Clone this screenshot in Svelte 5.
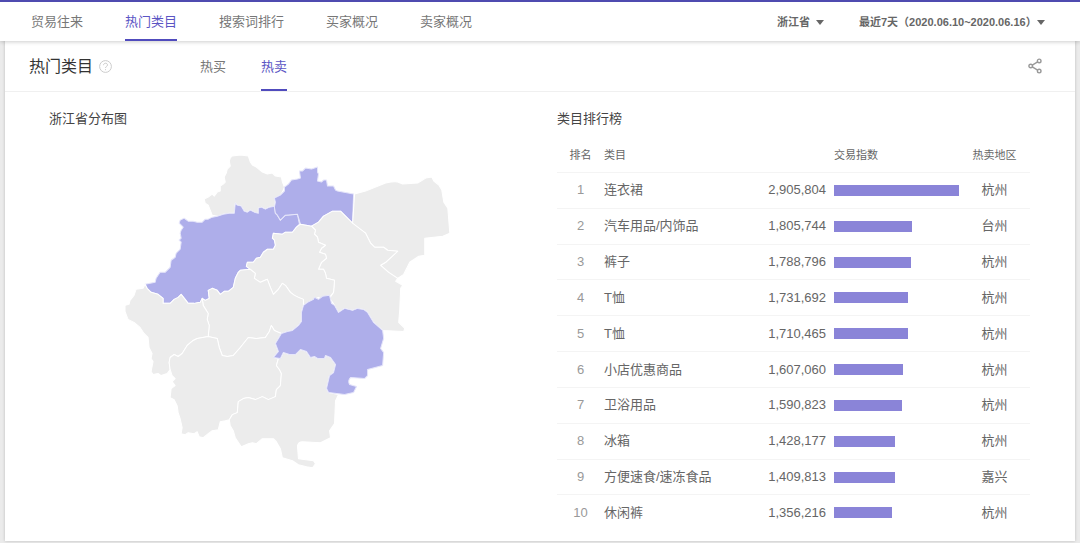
<script>
    const nav = ["贸易往来", "热门类目", "搜索词排行", "买家概况", "卖家概况"];
    const tabs = ["热买", "热卖"];

    let activeNav = "热门类目";
    let activeTab = "热卖";
    let province = "浙江省";
    let period = "最近7天（2020.06.10~2020.06.16）";

    const rows = [
        { name: "连衣裙", value: 2905804, region: "杭州" },
        { name: "汽车用品/内饰品", value: 1805744, region: "台州" },
        { name: "裤子", value: 1788796, region: "杭州" },
        { name: "T恤", value: 1731692, region: "杭州" },
        { name: "T恤", value: 1710465, region: "杭州" },
        { name: "小店优惠商品", value: 1607060, region: "杭州" },
        { name: "卫浴用品", value: 1590823, region: "杭州" },
        { name: "冰箱", value: 1428177, region: "杭州" },
        { name: "方便速食/速冻食品", value: 1409813, region: "嘉兴" },
        { name: "休闲裤", value: 1356216, region: "杭州" },
    ];

    const max = Math.max(...rows.map(r => r.value));

    // Outline of every city, hot ones are filled with the accent colour.
    const cities = [
        { name: "湖州", d: "M212 215L210 210 208 205 205 203 204 199 208 197 212 194 214 196 217 192 220 191 220 186 223 184 225 182 224 177 226 173 227 169 230 166 229 161 230 158 232 156 240 155 248 156 250 162 252 165 256 167 262 172 267 174 272 173 275 176 281 177 282 182 284 187 282 192 280 195 274 198 275 202 274 206 269 207 265 209 261 207 258 208 258 213 254 212 250 210 247 212 244 211 241 206 237 205 235 203 234 213 229 213 223 214 217 216Z" },
        { name: "杭州", hot: true, d: "M212 217L208 219 205 219 202 222 197 222 193 221 188 221 184 218 180 220 179 223 183 227 181 230 180 233 181 238 179 240 181 242 180 249 176 253 175 257 171 260 170 267 165 272 160 272 156 278 155 282 150 283 145 284 147 288 151 292 158 294 163 298 163 303 170 303 174 299 178 297 181 294 185 299 188 303 194 303 200 302 202 298 205 300 209 298 208 290 212 288 217 290 220 294 224 291 228 291 233 287 235 278 238 272 240 270 250 269 246 266 247 262 253 262 256 258 260 257 263 252 267 249 273 249 275 245 274 240 272 238 273 233 282 234 285 232 292 232 296 227 299 224 297 214 285 215 283 217 280 220 277 215 275 213 274 206 269 207 265 209 261 207 258 208 258 213 254 212 250 210 247 212 244 211 241 206 237 205 235 203 234 213 229 213 223 214 217 216Z" },
        { name: "嘉兴", hot: true, d: "M274 207L275 202 274 198 280 195 284 191 284 187 288 184 291 180 297 179 300 178 299 171 302 171 305 168 311 169 317 167 317 172 318 174 317 181 321 182 323 180 326 180 327 186 333 186 335 190 337 191 353 194 352 223 340 211 332 211 323 216 318 222 311 226 300 224 297 214 285 215 283 217 280 220 277 215 275 213Z" },
        { name: "舟山", d: "M354 194L365 191 385 183Q394 181 397 182L402 184 417 183 425 178 431 177 433 181 438 185 441 190 443 202 447 208 449 233 442 236 424 238 424 255 418 256 409 262 403 274 397 278 388 272 380 265 385 262 397 251 387 250 383 247 374 247 370 243 365 233 352 224Z" },
        { name: "宁波", d: "M311 226L318 222 323 216 332 211 340 211 352 223 365 233 370 243 374 247 383 247 387 250 397 251 385 262 380 265 388 272 397 278 395 281 402 285 400 288 399 310 398 322 404 328 403 331 382 330 373 322 367 312 363 309 357 308 352 310 344 308 338 312 334 305 332 302 329 298 333 292 334 280 326 278 325 273 323 269 318 269 321 262 326 258 325 254 319 252 321 248 325 245 318 242 317 237 314 234 315 230Z" },
        { name: "绍兴", d: "M300 224L311 226 315 230 314 234 317 237 318 242 325 245 321 248 319 252 325 254 326 258 321 262 318 269 323 269 325 273 326 278 334 280 333 292 329 297 326 297 322 299 318 297 313 299 307 302 303 305 303 299 298 297 294 295 290 292 285 285 282 283 278 289 273 294 270 287 267 279 260 282 254 278 255 273 250 269 246 266 247 262 253 262 256 258 260 257 263 252 267 249 273 249 275 245 274 240 272 238 273 233 282 234 285 232 292 232 296 227Z" },
        { name: "金华", d: "M202 298L203 305 208 313 207 319 209 325 208 336 212 337 217 338 219 347 222 355 227 356 233 355 240 347 248 337 256 338 265 337 269 331 271 325 274 330 278 332 281 333 287 331 292 330 298 325 301 321 301 312 303 305 303 299 298 297 294 295 290 292 285 285 282 283 278 289 273 294 270 287 267 279 260 282 254 278 255 273 250 269 240 270 238 272 235 278 233 287 228 291 224 291 220 294 217 290 212 288 208 290 209 298 205 300Z" },
        { name: "衢州", d: "M145 284L143 288 136 289 134 295 130 300 129 304 125 305 125 311 128 319 134 322 140 327 144 333 148 337 149 347 152 353 151 358 153 361 151 371 153 374 158 373 161 375 167 373 170 369 169 362 170 357 174 354 178 356 182 353 187 345 193 340 197 338 208 336 209 325 207 319 208 313 203 305 202 298 200 302 194 303 188 303 185 299 181 294 178 297 174 299 170 303 163 303 163 298 158 294 151 292 147 288Z" },
        { name: "丽水", d: "M170 357L169 362 170 369 172 375 175 378 172 381 175 385 171 388 170 397 174 399 177 405 178 412 180 418 182 427 181 433 185 434 188 432 194 433 197 431 199 436 203 437 208 433 212 430 218 429 220 421 225 420 229 419 232 414 237 412 238 401 243 398 248 397 255 399 262 396 268 399 275 396 276 389 280 385 281 373 279 369 276 365 278 358 273 357 278 351 275 343 281 333 274 330 271 325 269 331 265 337 256 338 248 337 240 347 233 355 227 356 222 355 219 347 217 338 208 336 197 338 193 340 187 345 182 353 178 356 174 354Z" },
        { name: "温州", d: "M229 419L230 425 233 430 235 437 241 446 248 443 252 442 256 443 262 438 273 438 276 441 280 448 282 457 292 460 298 464 306 466 312 467 315 463 313 460 298 458 297 445Q298 441 302 441L320 442 330 437 329 430 334 423 335 400 338 394 328 392 326 388 329 375 333 372 335 364 330 357 325 355 324 358 317 358 314 356 310 357 306 351 300 349 295 354 289 354 283 352 280 358 278 358 276 365 279 369 281 373 280 385 276 389 275 396 268 399 262 396 255 399 248 397 243 398 238 401 237 412 232 414Z" },
        { name: "台州", hot: true, d: "M303 305L307 302 313 299 314 297 318 299 322 296 329 295 331 303 334 305 338 312 344 308 352 310 357 308 363 309 367 312 373 322 382 330 383 338 380 348 383 352 382 365 367 369 367 375 364 378 350 377Q347 380 349 384L356 386 353 392 344 394 328 392 326 388 329 375 333 372 335 364 330 357 325 355 324 358 317 358 314 356 310 357 306 351 300 349 295 354 289 354 283 352 280 358 273 357 278 351 275 343 281 333 287 331 292 330 298 325 301 321 301 312Z" },
    ];
</script>

<header class="topbar">
    <nav>
        {#each nav as item}
            <a href="#{item}" class:active={item === activeNav} on:click={() => activeNav = item}>{item}</a>
        {/each}
    </nav>
    <div class="filters">
        <div class="select">
            <select aria-label="省份" bind:value={province}>
                <option>浙江省</option>
            </select>
            <svg width="8" height="5" viewBox="0 0 8 5"><path d="M0 0H8L4 5Z"/></svg>
        </div>
        <div class="select period">
            <select aria-label="时间" bind:value={period}>
                <option>最近7天（2020.06.10~2020.06.16）</option>
            </select>
            <svg width="8" height="5" viewBox="0 0 8 5"><path d="M0 0H8L4 5Z"/></svg>
        </div>
    </div>
</header>

<main class="card">
    <div class="card-head">
        <h1>热门类目</h1>
        <button class="icon help" aria-label="帮助">
            <svg width="13" height="13" viewBox="0 0 13 13">
                <circle cx="6.5" cy="6.5" r="5.9"/>
                <path d="M4.5 5.2C4.5 2.6 8.5 2.6 8.5 5C8.5 6.4 6.5 6.4 6.5 8M6.5 9.2V10.2"/>
            </svg>
        </button>
        <div class="tabs">
            {#each tabs as tab}
                <button class:active={tab === activeTab} on:click={() => activeTab = tab}>{tab}</button>
            {/each}
        </div>
        <button class="icon share" aria-label="分享">
            <svg width="14" height="16" viewBox="0 0 14 16">
                <path d="M4.3 7.1L9.6 3.9M4.3 8.9L9.6 12.1"/>
                <circle cx="2.7" cy="8" r="1.8"/>
                <circle cx="11.2" cy="2.9" r="1.8"/>
                <circle cx="11.2" cy="13.1" r="1.8"/>
            </svg>
        </button>
    </div>

    <div class="panels">
        <section>
            <h2>浙江省分布图</h2>
            <svg class="map" viewBox="120 150 335 322" role="img" aria-label="浙江省分布图">
                {#each cities as city}
                    <path class:hot={city.hot} d={city.d}/>
                {/each}
            </svg>
        </section>

        <section>
            <h2>类目排行榜</h2>
            <table>
                <thead>
                    <tr>
                        <th class="rank">排名</th>
                        <th>类目</th>
                        <th class="value"></th>
                        <th class="index">交易指数</th>
                        <th class="region">热卖地区</th>
                    </tr>
                </thead>
                <tbody>
                    {#each rows as row, i}
                        <tr>
                            <td class="rank">{i + 1}</td>
                            <td>{row.name}</td>
                            <td class="value">{row.value.toLocaleString("en-US")}</td>
                            <td class="index"><div class="bar" style="width: {row.value / max * 100}%"></div></td>
                            <td class="region">{row.region}</td>
                        </tr>
                    {/each}
                </tbody>
            </table>
        </section>
    </div>
</main>

<style>
    :global(body) {
        background: #ebebeb;
        color: #666;
        font: 13px/20px "Liberation Sans", "Noto Sans CJK SC", sans-serif;
    }

    .topbar {
        position: relative;
        display: flex;
        justify-content: space-between;
        box-sizing: border-box;
        height: 41px;
        padding: 0 35px 0 31px;
        border-top: 2px solid #4f4bb0;
        background: #fff;
        box-shadow: 0 1px 4px rgba(0, 0, 0, 0.2);
    }

    nav {
        display: flex;
        gap: 42px;
    }

    nav a {
        box-sizing: border-box;
        height: 39px;
        border-bottom: 2px solid transparent;
        line-height: 39px;
        color: #777;
        text-decoration: none;
    }

    nav a.active,
    .tabs .active {
        border-bottom-color: #504bbd;
        color: #5b55c4;
    }

    .filters {
        display: flex;
        align-items: center;
        gap: 35px;
    }

    .select {
        position: relative;
    }

    select {
        appearance: none;
        padding: 0 14px 0 0;
        border: 0;
        background: none;
        color: #666;
        font: bold 11px/20px "Liberation Sans", "Noto Sans CJK SC", sans-serif;
    }

    /* the full-width bracket already brings its own space */
    .period select {
        padding-right: 8px;
    }

    .select svg {
        position: absolute;
        top: 8px;
        right: 0;
        fill: #666;
        pointer-events: none;
    }

    .card {
        margin: 0 5px 2px;
        padding-bottom: 11px;
        background: #fff;
        box-shadow: 0 0 3px rgba(0, 0, 0, 0.2);
    }

    .card-head {
        display: flex;
        align-items: center;
        box-sizing: border-box;
        height: 51px;
        padding: 0 33px 0 24px;
        border-bottom: 1px solid #f0f0f0;
    }

    h1 {
        margin: 0;
        padding-top: 2px;
        color: #333;
        font-size: 16px;
        font-weight: normal;
    }

    button {
        padding: 0;
        border: 0;
        background: none;
        color: #777;
        font: inherit;
        cursor: pointer;
    }

    .icon svg {
        display: block;
        fill: none;
    }

    .help {
        margin-left: 6px;
        stroke: #ccc;
    }

    .share {
        margin-left: auto;
        stroke: #999;
        stroke-width: 1.4;
    }

    .tabs {
        display: flex;
        gap: 35px;
        margin-left: 88px;
    }

    .tabs button {
        height: 50px;
        padding-top: 4px;
        border-bottom: 2px solid transparent;
    }

    .tabs button.active {
        border-bottom-color: #504bbd;
    }

    .panels {
        display: grid;
        grid-template-columns: 1fr 1fr;
        gap: 35px;
        padding: 17px 45px 0 44px;
    }

    h2 {
        margin: 0;
        color: #444;
        font-size: 13px;
        font-weight: normal;
    }

    .map {
        display: block;
        width: 71%;
        margin: 21px 0 0 15%;
    }

    .map path {
        fill: #ececec;
        stroke: #fff;
        stroke-linejoin: round;
    }

    .map .hot {
        fill: #aeaeea;
        stroke: #e6e6fa;
    }

    table {
        width: 100%;
        height: 393px;
        margin-top: 8px;
        border-collapse: collapse;
        table-layout: fixed;
    }

    th,
    td {
        padding: 0;
        border-bottom: 1px solid #f4f4f4;
        text-align: left;
    }

    tbody tr:last-child td {
        border-bottom: 0;
    }

    th {
        height: 35px;
        font-size: 11px;
        font-weight: normal;
    }

    .rank {
        width: 47px;
        text-align: center;
    }

    td.rank {
        color: #999;
    }

    .value {
        width: 90px;
        text-align: right;
    }

    .index {
        width: 125px;
        padding-left: 8px;
    }

    .region {
        width: 71px;
        text-align: center;
    }

    .bar {
        height: 11px;
        background: #8a84d8;
    }
</style>
